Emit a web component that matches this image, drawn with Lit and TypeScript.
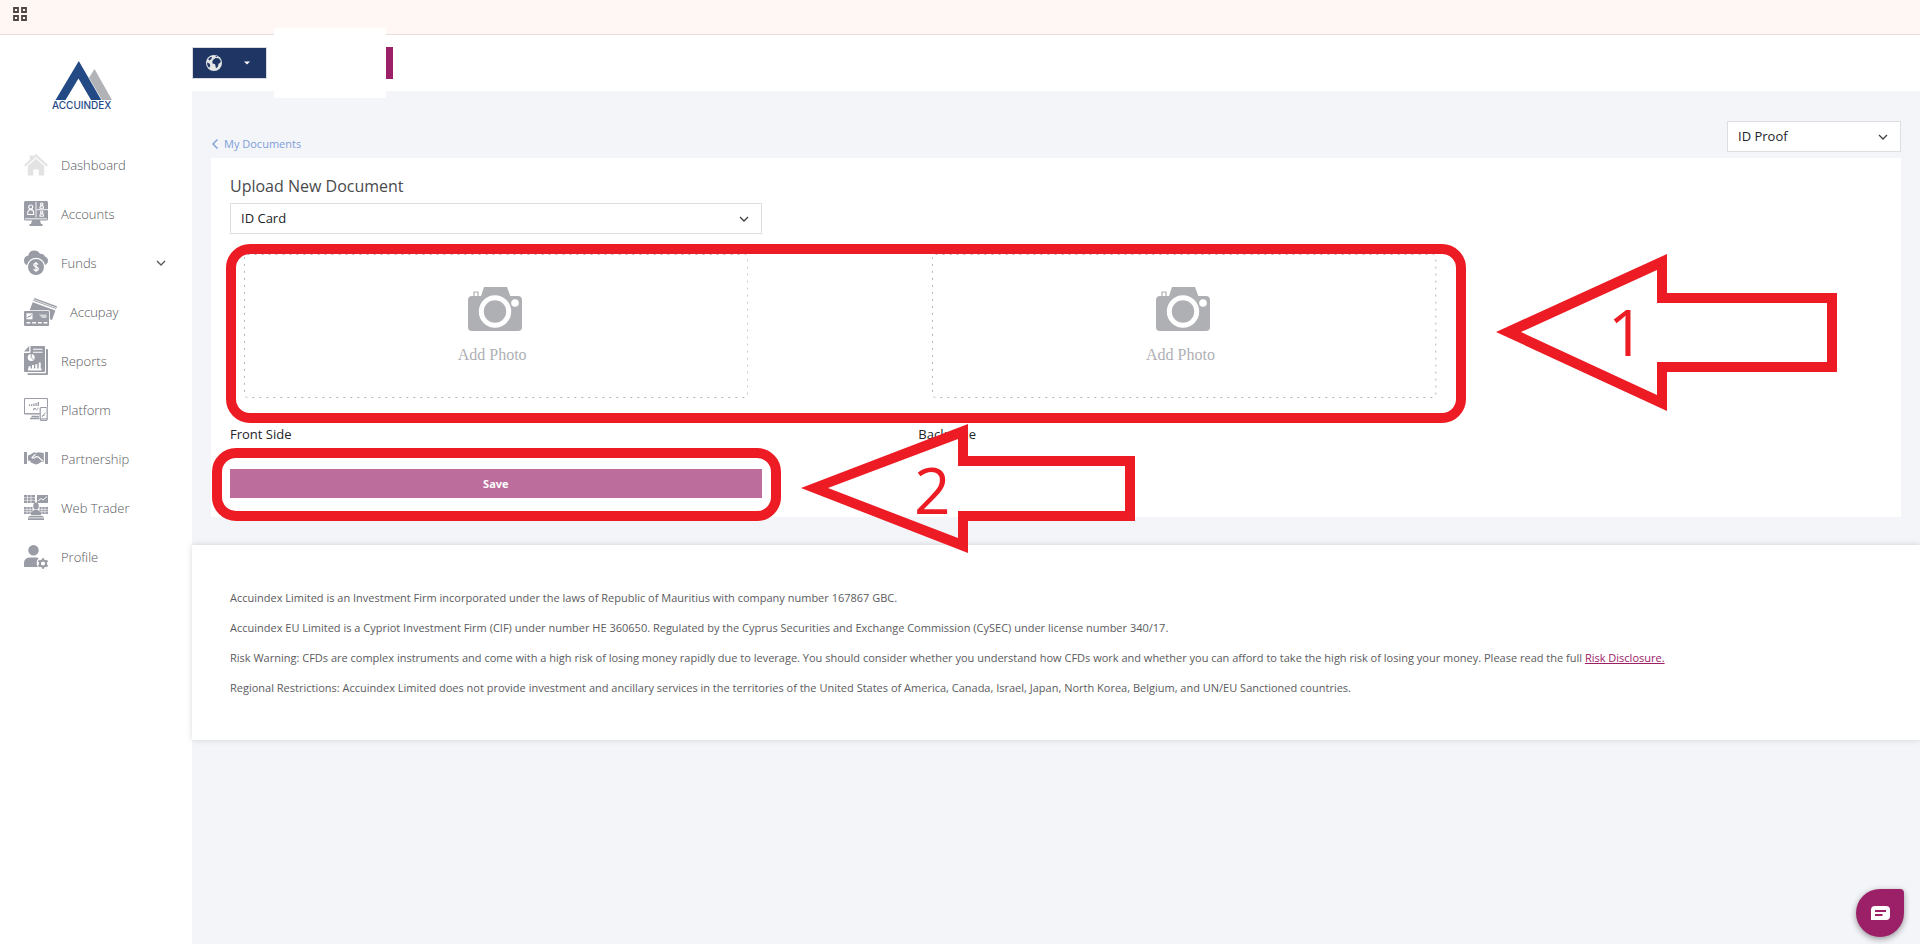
import { LitElement, html, svg, css } from "lit";
import { customElement, property } from "lit/decorators.js";

const chevronDown = html`<svg class="chevron" viewBox="0 0 10 6" width="10" height="6" aria-hidden="true">
  <path d="M1 1l4 4 4-4" fill="none" stroke="currentColor" stroke-width="1.300" />
</svg>`;

interface NavItem {
  label: string;
  width: number;
  height: number;
  icon: unknown;
  expandable?: boolean;
}

const NAV: NavItem[] = [
  {
    label: "Dashboard",
    width: 24,
    height: 22,
    icon: svg`<g fill="#e3e3e4"><path d="M12 0 24 11l-1.500 1.600L12 3 1.500 12.600 0 11 5.800 5.700V1.500h3.400v1.100z"/><path d="M12 4.500 20.200 12v9.500h-5.500v-6H9.300v6H3.800V12z"/></g>`,
  },
  {
    label: "Accounts",
    width: 24,
    height: 25,
    icon: svg`<path fill="#999ba5" d="M1.500 0h21A1.500 1.500 0 0 1 24 1.500v16.500a1.500 1.500 0 0 1-1.500 1.500H16l1 3.500h1.500V25h-13v-2H7l1-3.500H1.500A1.500 1.500 0 0 1 0 18V1.500A1.500 1.500 0 0 1 1.500 0z"/>
      <path d="M1 17.800h22M12 1v15.500M12.500 8.700H24" stroke="#fff" stroke-width=".9"/>
      <g fill="none" stroke="#fff" stroke-width="1.100"><circle cx="6.700" cy="6" r="2"/><path d="M3.800 13.500v-2a2.900 2.900 0 0 1 5.800 0v2z"/><circle cx="17.700" cy="3.200" r="1.200"/><path d="M16 7.200V6.300a1.700 1.700 0 0 1 3.400 0v.9z"/><circle cx="17.700" cy="11.200" r="1.200"/><path d="M16 15.200v-.9a1.700 1.700 0 0 1 3.400 0v.9z"/></g>`,
  },
  {
    label: "Funds",
    width: 24,
    height: 25,
    expandable: true,
    icon: svg`<path fill="#999ba5" d="M3 15A4.800 4.800 0 0 1 0 10.500C0 7.500 2 5.600 4.400 5.500A6 6 0 0 1 10.300.5a6.500 6.500 0 0 1 5.600 3.300A4.800 4.800 0 0 1 21 6.600a4.600 4.600 0 0 1 3 4.200c0 2-1.200 3.500-2.900 4.200A9.300 9.300 0 0 0 12 7.800 9.300 9.300 0 0 0 3 15z"/>
      <circle cx="12" cy="17" r="8" fill="#999ba5"/>
      <path d="M14 14.600c-.3-.9-1-1.300-2-1.300-1.200 0-2.100.7-2.100 1.700 0 2.400 4.400 1.300 4.400 3.800 0 1.100-1 1.800-2.300 1.800-1.200 0-2.100-.5-2.300-1.600M12 12v10" fill="none" stroke="#fff" stroke-width="1.300"/>`,
  },
  {
    label: "Accupay",
    width: 33,
    height: 28,
    icon: svg`<path fill="#999ba5" d="M10.500 0 33 8.300l-1 2.700L9.300 2.700zM8.700 4.200l22.700 8.400L28 22l-2.200-.8V13.500a1.300 1.300 0 0 0-1.300-1.300H5.700z"/>
      <rect y="13" width="25" height="15" rx="1" fill="#999ba5"/>
      <path d="M9.800 1.600 32.400 9.900" stroke="#fff" stroke-width=".7"/>
      <rect x="2.500" y="15.300" width="6" height="6" fill="#fff"/><path d="M3.500 20l1.500-2 1 .8 1.500-2.300" stroke="#999ba5" fill="none"/>
      <path d="M15 16.500h7.500V20H18z" fill="#d4d5d9"/><path d="M2.500 24.800h21" stroke="#fff" stroke-width="1.600" stroke-dasharray="3.800 1.900"/>`,
  },
  {
    label: "Reports",
    width: 24,
    height: 29,
    icon: svg`<path fill="#999ba5" d="M6.500 0H20a1 1 0 0 1 1 1v24a1 1 0 0 1-1 1H1a1 1 0 0 1-1-1V7h5.500a1 1 0 0 0 1-1z"/><path d="M0 5.500 5.200 0v5.500z" fill="#999ba5"/>
      <path d="M22 3h1a1 1 0 0 1 1 1v24a1 1 0 0 1-1 1H4.500a1 1 0 0 1-1-1v-.8H21a1 1 0 0 0 1-1z" fill="#999ba5"/>
      <path d="M9 3.300h9.500M9 6.300h9.500" stroke="#fff" stroke-width="1.100"/>
      <circle cx="7.200" cy="11.500" r="3.500" fill="#fff"/><path d="M7.200 8v3.500l2.300 2.400" stroke="#999ba5" fill="none"/>
      <path d="M4 23.500h13.500M5.600 23v-2.800M9 23v-4M12.300 23v-4.800M15.700 23v-6.500" stroke="#fff" stroke-width="2"/>`,
  },
  {
    label: "Platform",
    width: 24,
    height: 23,
    icon: svg`<path d="M.5.500h23v9M16 15.800H.5V.5" fill="none" stroke="#999ba5"/><path d="M.5 14.500v1.300H15.500" stroke="#999ba5" fill="none"/>
      <path d="M7.500 18.500h7.500M6 20.500h9" stroke="#999ba5" stroke-width="1.300"/>
      <path d="M5.500 8V6.500M7.700 8V6.200M9.900 8V5.600M12.100 8V5M14.300 8V4" stroke="#999ba5" stroke-width="1.300"/>
      <path d="M9 12l2-1.300 1.500 1 2-1.700M9.500 10.500h2" stroke="#999ba5" fill="none"/>
      <rect x="16.200" y="9.500" width="7" height="12.800" rx="1" fill="#fff" stroke="#999ba5" stroke-width="1.200"/><path d="M18 19l3.500-4.500M18.500 17.500h2M16.500 20.800h6.500" stroke="#999ba5" fill="none"/>`,
  },
  {
    label: "Partnership",
    width: 24,
    height: 13,
    icon: svg`<path fill="#999ba5" d="M0 0h3v12H0zM21 0h3v12h-3zM6 2.800 10 .3l2 .7 2.500-.7 5.300.7v8.700h-2.300l-2.600 1.800-3 .9-3.900-1.400-3.500-2H4V3.500z"/>
      <path d="M4.500 8.800 6.500 10M11.500 2.200 8 5.500c1.200 1.200 2.700.5 4-.8l2.500.3 4.200 4" stroke="#fff" stroke-width="1.100" fill="none"/>`,
  },
  {
    label: "Web Trader",
    width: 24,
    height: 25,
    icon: svg`<path fill="#999ba5" d="M0 0h11v8H0zM13 0h11v8H13zM0 12h8.500v7H0zM15.500 12H24v7h-8.500z"/>
      <path d="M0 2.700h11M0 5.300h11M3.500 0v8M7 0v8M0 14.400h8.500M0 16.700h8.500M3 12v7M6 12v7M15.500 14.400H24M15.500 16.700H24M18 12v7M21 12v7" stroke="#fff" stroke-width=".6"/>
      <path d="M14 6l3-2.500 2 1.500 4-3.500" stroke="#fff" fill="none"/>
      <ellipse cx="12" cy="11" rx="2.800" ry="3.500" fill="#999ba5"/><path d="M7 20c.3-3.500 2.500-5.200 5-5.200s4.700 1.700 5 5.200z" fill="#999ba5"/>
      <path d="M3.500 22.500 6 20.800h12l2.500 1.700zM4 23.300h16V25H4z" fill="#999ba5"/>`,
  },
  {
    label: "Profile",
    width: 24,
    height: 24,
    icon: svg`<circle cx="9.500" cy="5.300" r="5.200" fill="#999ba5"/><path d="M0 22v-4a5.500 5.500 0 0 1 5.500-5.500h6.800c.8 0 1.600.2 2.300.5L12.800 16v4l1 2z" fill="#999ba5"/>
      <circle cx="19" cy="18.500" r="3.100" fill="none" stroke="#999ba5" stroke-width="2"/><path d="M19 13.200v2M19 21.800v2M14.400 15.800l1.700 1M21.900 20.200l1.700 1M14.400 21.200l1.700-1M21.900 16.800l1.700-1" stroke="#999ba5" stroke-width="2.200"/>`,
  },
];

const NOTICES = [
  "Accuindex Limited is an Investment Firm incorporated under the laws of Republic of Mauritius with company number 167867 GBC.",
  "Accuindex EU Limited is a Cypriot Investment Firm (CIF) under number HE 360650. Regulated by the Cyprus Securities and Exchange Commission (CySEC) under license number 340/17.",
];

@customElement("side-nav")
export class SideNav extends LitElement {
  static styles = css`
    :host {
      display: block;
      background: #fff;
      font-family: "Open Sans", sans-serif;
    }
    .logo {
      display: block;
      margin: 26px 0 0 51px;
    }
    .wordmark {
      font: 500 10px/1 Inter, sans-serif;
      fill: #244a86;
    }
    .list {
      list-style: none;
      margin: 30px 0 0;
      padding: 0 26px 0 24px;
    }
    .item {
      display: flex;
      align-items: center;
      gap: 13px;
      height: 49px;
      font-size: 13px;
      font-weight: 300;
      line-height: 20px;
      color: #58585b;
      text-decoration: none;
    }
    .icon {
      flex: none;
    }
    .label {
      flex: 1;
    }
  `;

  render() {
    return html`
      <svg class="logo" width="64" height="49" viewBox="0 0 64 49" role="img" aria-label="Accuindex">
        <path d="M43.500 8 61 39H51L38 16.800z" fill="#b1b3b6" />
        <path d="M27.800 0 50.300 39H40L27.500 17.500 14.500 39H4.500z" fill="#244a86" />
        <text class="wordmark" x="1" y="48">ACCUINDEX</text>
      </svg>
      <nav aria-label="Main">
        <ul class="list">
          ${NAV.map(
            (n) => html`<li>
              <a class="item" href="#">
                <svg class="icon" width=${n.width} height=${n.height} viewBox="0 0 ${n.width} ${n.height}" aria-hidden="true">${n.icon}</svg>
                <span class="label">${n.label}</span>
                ${n.expandable ? chevronDown : ""}
              </a>
            </li>`
          )}
        </ul>
      </nav>
    `;
  }
}

@customElement("photo-drop")
export class PhotoDrop extends LitElement {
  @property() label = "";

  static styles = css`
    :host {
      display: block;
      font-family: "Open Sans", sans-serif;
    }
    .zone {
      position: relative;
      display: flex;
      flex-direction: column;
      align-items: center;
      box-sizing: border-box;
      width: calc(100% - 184px);
      height: 144px;
      margin: 0 170px 26px 14px;
      padding: 33px 2px 0 0;
      border: 0;
      background: none;
      color: #afb0b4;
      font: 16px/20px "Liberation Serif", serif;
      cursor: pointer;
    }
    .outline {
      position: absolute;
      inset: 0;
      width: 100%;
      height: 100%;
    }
    .text {
      margin: 13px 6px 0 0;
    }
    .caption {
      display: block;
      font-size: 13px;
      line-height: 20px;
      color: #212529;
    }
  `;

  render() {
    return html`
      <button class="zone" type="button" aria-labelledby="caption text">
        <svg class="outline" aria-hidden="true">
          <rect x="0.500" y="0.500" width="99.8%" height="99.300%" rx="3" fill="none" stroke="#b4b5b9" stroke-dasharray="2 5" />
        </svg>
        <svg width="55" height="45" viewBox="0 0 55 45" aria-hidden="true">
          <path d="M16 0h23l3.300 9H50a4 4 0 0 1 4 4v27a4 4 0 0 1-4 4H4a4 4 0 0 1-4-4V13a4 4 0 0 1 4-4h9z" fill="#afb0b4" />
          <path d="M6 9.500V5h4v4.500" fill="none" stroke="#afb0b4" stroke-width="1.200" />
          <circle cx="27" cy="24.500" r="13.700" fill="#afb0b4" stroke="#fff" stroke-width="5" />
          <circle cx="47" cy="16" r="3.800" fill="#fff" />
        </svg>
        <span class="text" id="text">Add Photo</span>
      </button>
      <span class="caption" id="caption">${this.label}</span>
    `;
  }
}

@customElement("app-root")
export class AppRoot extends LitElement {
  static styles = css`
    :host {
      display: flex;
      flex-direction: column;
      min-height: 100vh;
      background: #f4f5f9;
      font-family: "Open Sans", sans-serif;
      font-size: 13px;
      line-height: 20px;
      color: #212529;
    }
    .bookmarks {
      box-sizing: border-box;
      height: 35px;
      padding: 7px 13px;
      background: #fff7f4;
      border-bottom: 1px solid #e8dfdb;
    }
    .apps {
      display: block;
      padding: 0;
      border: 0;
      background: none;
    }
    .apps svg {
      display: block;
    }
    .body {
      flex: 1;
      display: grid;
      grid-template-columns: 192px minmax(0, 1fr);
    }
    .header {
      position: relative;
      display: flex;
      align-items: center;
      height: 56px;
      background: #fff;
    }
    .language {
      display: flex;
      align-items: center;
      justify-content: space-between;
      box-sizing: border-box;
      width: 75px;
      height: 32px;
      padding: 0 16px 0 13px;
      border: 1px solid #d9dbe0;
      background: #1f3665;
    }
    .tab {
      width: 7px;
      height: 32px;
      margin-left: 119px;
      background: #9b2067;
    }
    .blank {
      position: absolute;
      left: 82px;
      top: -7px;
      width: 112px;
      height: 70px;
      background: #fff;
    }
    .content {
      position: relative;
      padding: 30px 19px 28px;
    }
    .toolbar {
      display: flex;
      justify-content: space-between;
      align-items: flex-end;
      margin-bottom: 6px;
    }
    .back {
      display: flex;
      align-items: center;
      gap: 6px;
      padding-left: 1px;
      font-size: 11px;
      line-height: 16px;
      color: #7d9ed8;
      text-decoration: none;
    }
    .select {
      position: relative;
      display: block;
      width: 174px;
    }
    .select select {
      display: block;
      appearance: none;
      box-sizing: border-box;
      width: 100%;
      height: 31px;
      padding: 0 32px 2px 10px;
      border: 1px solid #dcdee2;
      border-radius: 0;
      background: #fff;
      color: #212529;
      font: 13px/20px "Open Sans", sans-serif;
    }
    .select .chevron {
      position: absolute;
      right: 13px;
      top: 13px;
      color: #404040;
      pointer-events: none;
    }
    .card {
      padding: 16px 19px 19px;
      background: #fff;
    }
    .title {
      margin: 0 0 5px;
      font-size: 16px;
      line-height: 24px;
      font-weight: 400;
      color: #4a4a4d;
    }
    .field {
      width: calc(100% / 3 - 19px);
    }
    .photos {
      display: grid;
      grid-template-columns: 5fr 5fr 2fr;
      margin: 20px 0 25px;
    }
    .save {
      display: block;
      height: 29px;
      padding: 0;
      border: 0;
      background: #bc6d9b;
      color: #fff;
      font: 700 11px/20px "Open Sans", sans-serif;
    }
    .notes {
      position: absolute;
      left: 0;
      top: 0;
      z-index: 1;
      overflow: visible;
      pointer-events: none;
    }
    .mark {
      font: 400 64px/1 "Open Sans", sans-serif;
      fill: #ed1c24;
    }
    .legal {
      padding: 43px 38px 42px;
      background: #fff;
      box-shadow: 0 0 6px rgba(0, 0, 0, 0.15);
      font-size: 11px;
      color: #5b5b5e;
    }
    .legal p {
      margin: 0 0 10px;
    }
    .legal p:last-child {
      margin: 0;
    }
    .legal a {
      color: #9b2067;
    }
    .chat {
      position: fixed;
      right: 16px;
      bottom: 7px;
      display: flex;
      align-items: center;
      justify-content: center;
      width: 48px;
      height: 48px;
      padding: 0;
      border: 0;
      border-radius: 24px 4px 24px 24px;
      background: #9b2067;
      box-shadow: 0 2px 6px rgba(0, 0, 0, 0.4);
    }
  `;

  render() {
    return html`
      <div class="bookmarks">
        <button class="apps" type="button" aria-label="Apps">
          <svg width="14" height="14" viewBox="0 0 14 14" fill="none" stroke="#4d4743" stroke-width="1.800">
            <path d="M1 1h4v4H1zM9 1h4v4H9zM1 9h4v4H1zM9 9h4v4H9z" />
          </svg>
        </button>
      </div>
      <div class="body">
        <side-nav></side-nav>
        <main>
          <header class="header">
            <button class="language" type="button" aria-label="Language">
              <svg width="16" height="16" viewBox="0 0 16 16" aria-hidden="true">
                <circle cx="8" cy="8" r="8" fill="#e4e6e6" />
                <path d="M7.500 4.500 9.500 3l3 .3 2.200 2.200-.4 2.500-1.600.5-1 3.500-1.700 1.200-.9-4L6.600 8.500 6.300 6.300zM2.200 4l2.300-2 1.800.2-1.200 2L3.300 5.500zM1 7.500l2.500 1 .8 2-1 2.200L1.600 11zM9 .8l2.500.7-1 .8z" fill="#1f3665" />
              </svg>
              <svg width="6" height="4" viewBox="0 0 6 4" aria-hidden="true"><path d="M0 .5h6L3 3.500z" fill="#fff" /></svg>
            </button>
            <div class="tab"></div>
            <div class="blank"></div>
          </header>
          <section class="content">
            <div class="toolbar">
              <a class="back" href="#">
                <svg width="6" height="10" viewBox="0 0 6 10" aria-hidden="true"><path d="M5.500.5 1 5l4.500 4.500" fill="none" stroke="currentColor" stroke-width="1.400" /></svg>
                My Documents
              </a>
              <label class="select">
                <select aria-label="Document category"><option>ID Proof</option></select>
                ${chevronDown}
              </label>
            </div>
            <form class="card" @submit=${(e: Event) => e.preventDefault()}>
              <h1 class="title">Upload New Document</h1>
              <label class="select field">
                <select aria-label="Document type"><option>ID Card</option></select>
                ${chevronDown}
              </label>
              <div class="photos">
                <photo-drop label="Front Side"></photo-drop>
                <photo-drop label="Back Side"></photo-drop>
              </div>
              <button class="save field" type="submit">Save</button>
            </form>
            <svg class="notes" width="1728" height="472" viewBox="192 91 1728 472" aria-hidden="true">
              <g fill="none" stroke="#ed1c24" stroke-width="10">
                <rect x="231" y="249" width="1230" height="169" rx="19" />
                <rect x="217" y="453" width="559" height="63" rx="19" />
              </g>
              <g fill="#ed1c24" fill-rule="evenodd">
                <path d="M1496 332 1667 254V293H1837V372H1667V411ZM1521 332 1657 395V362H1827V303H1657V270Z" />
                <path d="M801 488 968 424V456H1135V521H968V553ZM828 488 958 538V511H1125V466H958V439Z" />
              </g>
              <text class="mark" x="1608" y="356">1</text>
              <text class="mark" x="914" y="514">2</text>
            </svg>
          </section>
          <footer class="legal">
            ${NOTICES.map((t) => html`<p>${t}</p>`)}
            <p>
              Risk Warning: CFDs are complex instruments and come with a high risk of losing money rapidly due to leverage. You should consider whether you understand how CFDs work and whether you can afford to take the high risk of losing your money. Please read the full
              <a href="#">Risk Disclosure.</a>
            </p>
            <p>
              Regional Restrictions: Accuindex Limited does not provide investment and ancillary services in the territories of the United States of America, Canada, Israel, Japan, North Korea, Belgium, and UN/EU Sanctioned countries.
            </p>
          </footer>
        </main>
      </div>
      <button class="chat" type="button" aria-label="Chat">
        <svg width="19" height="14" viewBox="0 0 19 14" aria-hidden="true">
          <path d="M4 0h11a4 4 0 0 1 4 4v6a4 4 0 0 1-4 4H0V4a4 4 0 0 1 4-4z" fill="#fff" />
          <path d="M4 5h11M4 9h7.500" stroke="#9b2067" stroke-width="1.800" />
        </svg>
      </button>
    `;
  }
}
